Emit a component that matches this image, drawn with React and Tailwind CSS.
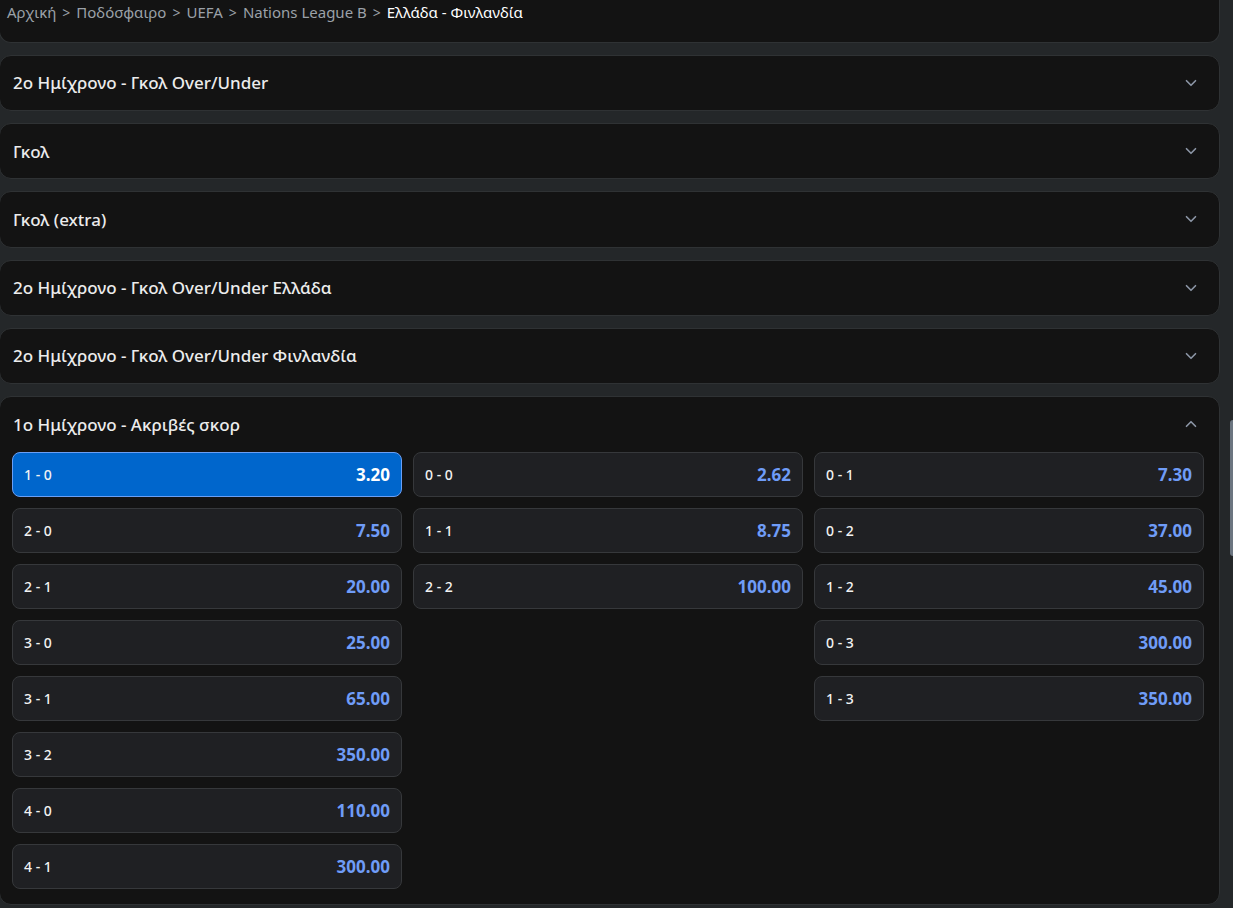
import { ChevronDown, ChevronUp } from 'lucide-react';

const crumbs = ['Αρχική', 'Ποδόσφαιρο', 'UEFA', 'Nations League B'];

const collapsed = [
  '2ο Ημίχρονο - Γκολ Over/Under',
  'Γκολ',
  'Γκολ (extra)',
  '2ο Ημίχρονο - Γκολ Over/Under Ελλάδα',
  '2ο Ημίχρονο - Γκολ Over/Under Φινλανδία',
];

const columns = [
  [
    ['1 - 0', '3.20', true],
    ['2 - 0', '7.50'],
    ['2 - 1', '20.00'],
    ['3 - 0', '25.00'],
    ['3 - 1', '65.00'],
    ['3 - 2', '350.00'],
    ['4 - 0', '110.00'],
    ['4 - 1', '300.00'],
  ],
  [
    ['0 - 0', '2.62'],
    ['1 - 1', '8.75'],
    ['2 - 2', '100.00'],
  ],
  [
    ['0 - 1', '7.30'],
    ['0 - 2', '37.00'],
    ['1 - 2', '45.00'],
    ['0 - 3', '300.00'],
    ['1 - 3', '350.00'],
  ],
];

const OddButton = ({ label, odd, selected }) => (
  <button
    className={
      'flex h-[45px] w-full items-center justify-between rounded-lg border pl-[11px] pr-[11px] ' +
      (selected ? 'border-[#6a9ff5] bg-[#0066cc]' : 'border-[#36383b] bg-[#1f2023]')
    }
  >
    <span className="text-[14px] font-medium text-[#f2f2f2]">{label}</span>
    <span className={'text-[17px] font-bold ' + (selected ? 'text-white' : 'text-[#6f9cf7]')}>{odd}</span>
  </button>
);

const App = () => {
  return (
    <div className="relative flex h-[908px] w-[1233px] overflow-hidden bg-[#242729]" style={{ fontFamily: '"Noto Sans", "Open Sans", sans-serif' }}>
      <div className="ml-[-1px] flex w-[1221px] flex-col gap-3">
        <div className="h-[43px] shrink-0 rounded-b-xl border border-t-0 border-[#2f3234] bg-[#131313] px-[7px]">
          <div className="flex h-[24px] items-center gap-[6px] text-[15px] text-[#9ba1a8]">
            {crumbs.map((c) => (
              <span key={c} className="flex items-center gap-[6px]">
                {c}
                <span className="text-[14px]">&gt;</span>
              </span>
            ))}
            <span className="text-white">Ελλάδα - Φινλανδία</span>
          </div>
        </div>

        {collapsed.map((t) => (
          <div key={t} className="flex h-[56.2px] shrink-0 items-center justify-between rounded-xl border border-[#2f3234] bg-[#131313] pl-[13px] pr-[19px]">
            <span className="text-[17px] font-medium text-[#ececec]">{t}</span>
            <ChevronDown size={18} strokeWidth={2.2} className="text-[#8c96a6]" />
          </div>
        ))}

        <div className="rounded-xl border border-[#2f3234] bg-[#131313] pb-[15px] pl-3 pr-[15px]">
          <div className="flex h-[55px] items-center justify-between pl-px pr-1">
            <span className="text-[17px] font-medium text-[#ececec]">1ο Ημίχρονο - Ακριβές σκορ</span>
            <ChevronUp size={18} strokeWidth={2.2} className="text-[#8c96a6]" />
          </div>
          <div className="grid grid-cols-3 items-start gap-[11px]">
            {columns.map((col, i) => (
              <div key={i} className="flex flex-col gap-[11px]">
                {col.map(([l, o, s]) => (
                  <OddButton key={l} label={l} odd={o} selected={s} />
                ))}
              </div>
            ))}
          </div>
        </div>
      </div>
      <div className="absolute right-0 top-[420px] h-[136px] w-[3px] rounded-l bg-[#6b7580]" />
    </div>
  );
};

export default App;
